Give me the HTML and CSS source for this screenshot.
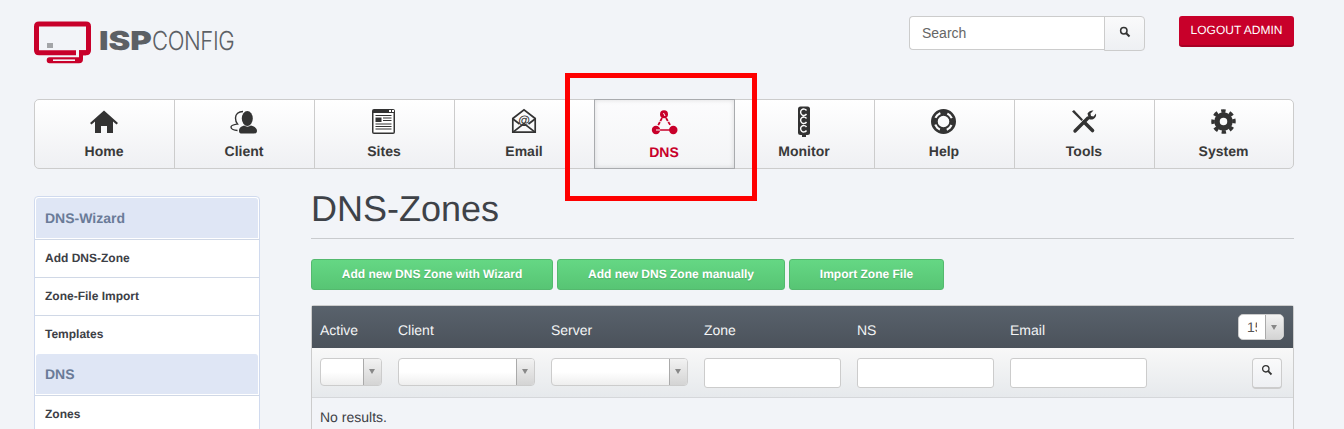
FILE: index.html
```html
<!DOCTYPE html>
<html lang="en">
<head>
<meta charset="utf-8">
<title>ISPConfig DNS-Zones</title>
<link rel="stylesheet" href="styles.css">
</head>
<body>
<div class="page">
  <header class="top">
    <a class="logo">
      <svg class="logo-mark" width="58" height="44" viewBox="0 0 58 44">
        <path d="M45 31.700H52Q54.500 31.700 54.500 29.200V5.500Q54.500 3 52 3H5Q2.500 3 2.500 5.500V29.200Q2.500 31.700 5 31.700H42" fill="none" stroke="#c8002a" stroke-width="5"/>
        <path d="M45 29.200H52V34.200H49V38Q49 42.300 45 42.300H15.500Q12.700 42.300 12.700 39.300Q12.700 36.300 15.500 36.300H45Z" fill="#c8002a"/>
        <rect x="19" y="38.400" width="22" height="1.600" fill="#f2f4f8"/>
        <rect x="13" y="22" width="6" height="5" fill="#a3a5a8"/>
      </svg>
      <span class="logo-text"><b class="logo-isp">ISP</b><span class="logo-config">CONFIG</span></span>
    </a>
    <div class="top-right">
      <div class="search">
        <input class="search-input" type="text" placeholder="Search">
        <span class="search-btn">
          <svg width="12" height="12" viewBox="0 0 12 12"><circle cx="4.800" cy="4.800" r="3.200" fill="none" stroke="#333" stroke-width="1.500"/><path d="M7.200 7.200L10.500 10.500" stroke="#333" stroke-width="2"/></svg>
        </span>
      </div>
      <a class="logout">LOGOUT ADMIN</a>
    </div>
  </header>

  <nav class="nav">
    <a class="nav-item">
      <svg class="nav-icon" viewBox="0 0 32 32"><path d="M16 4.500L30 17L28.500 18.500L25 15.500V27H19V20H13V27H7V15.500L3.500 18.500L2 17Z"/></svg>
      <span>Home</span>
    </a>
    <a class="nav-item">
      <svg class="nav-icon" viewBox="0 0 32 32"><ellipse cx="19.300" cy="12.500" rx="5.500" ry="7.500"/><path d="M11 25C11 21.500 13.500 20.500 16 19.500C18 21 21 21 23 19.500C26 20.500 29 21.500 29 25C29 27 27.500 27.500 26 27.500H14C12 27.500 11 27 11 25Z"/><path d="M15 5.500C10.500 5.500 7.500 8 7.500 12C7.500 15 8.500 17 9.500 18C7 18.500 3 19 3 21C3 23 6 24.500 9.500 24.500" fill="none" stroke="#333" stroke-width="1.400"/></svg>
      <span>Client</span>
    </a>
    <a class="nav-item">
      <svg class="nav-icon" viewBox="0 0 32 32"><rect x="4" y="3" width="23" height="25" rx="2"/><rect x="5.500" y="7" width="20" height="19.500" fill="#fff"/><rect x="21" y="4" width="2" height="2" fill="#fff"/><rect x="24" y="4" width="2" height="2" fill="#fff"/><rect x="7.500" y="11.500" width="6" height="4.500"/><path d="M7.500 9.500H23.500M15 12H23.500M15 14.500H23.500M7.500 18H23.500M7.500 20.500H23.500M7.500 23H23.500" stroke="#333" stroke-width="1.100"/></svg>
      <span>Sites</span>
    </a>
    <a class="nav-item">
      <svg class="nav-icon" viewBox="0 0 32 32"><path d="M4.800 12.500L16 3.800L27.200 12.500V26.200H4.800Z" fill="none" stroke="#333" stroke-width="1.700"/><path d="M5 13L11.500 18M27 13L20.500 18M5 26.200L16 17.500L27 26.200" fill="none" stroke="#333" stroke-width="1.700"/><text class="at" x="16" y="17.500" text-anchor="middle">@</text></svg>
      <span>Email</span>
    </a>
    <a class="nav-item active">
      <svg class="nav-icon" viewBox="0 0 32 32"><circle cx="16" cy="7.300" r="4"/><circle cx="8" cy="23" r="4.200"/><circle cx="25.300" cy="23" r="4.200"/><path d="M14 11L10 18.500M18 11L22.500 18.500" stroke="#c8002a" stroke-width="1.800" stroke-dasharray="3.500 1" fill="none"/><path d="M8 23H22" stroke="#c8002a" stroke-width="1.500" fill="none"/><path d="M8 23H12.200M15.500 6L17 9" stroke="#fff" stroke-width="1" fill="none"/></svg>
      <span>DNS</span>
    </a>
    <a class="nav-item">
      <svg class="nav-icon" viewBox="0 0 32 32"><rect x="10" y="0.500" width="12" height="28.500" rx="2.500"/><rect x="14" y="28" width="4" height="3"/><path d="M18.500 4.500A3.200 3.200 0 1 0 18.500 8M18.500 12.500A3.200 3.200 0 1 0 18.500 16M18.500 21A3.200 3.200 0 1 0 18.500 24.500" fill="none" stroke="#fff" stroke-width="1.400"/></svg>
      <span>Monitor</span>
    </a>
    <a class="nav-item">
      <svg class="nav-icon" viewBox="0 0 32 32"><circle cx="15.500" cy="15.500" r="11.200" fill="none" stroke="#333" stroke-width="2.600"/><circle cx="15.500" cy="15.500" r="6.800" fill="none" stroke="#333" stroke-width="2"/><circle cx="15.500" cy="15.500" r="9" fill="none" stroke="#333" stroke-width="5" stroke-dasharray="7.140 7" transform="rotate(-22 15.500 15.500)"/></svg>
      <span>Help</span>
    </a>
    <a class="nav-item">
      <svg class="nav-icon" viewBox="0 0 32 32"><path d="M4 5.500L6 4L15 13.500L13.500 15Z"/><path d="M16 16L24.500 24.500" stroke="#333" stroke-width="3.600" stroke-linecap="round"/><path d="M7 25L20 12" stroke="#333" stroke-width="3.400" stroke-linecap="round"/><path d="M19.500 7.500C21 5 23.500 4 25.500 4.500L22.500 7.500L23 10L25.500 10.500L28 7.500C28.500 10 27.500 12 25.500 13C24 13.800 22 13.800 21 13Z"/></svg>
      <span>Tools</span>
    </a>
    <a class="nav-item">
      <svg class="nav-icon" viewBox="0 0 32 32"><circle cx="15.500" cy="15.500" r="6.500" fill="none" stroke="#333" stroke-width="5.500"/><circle cx="15.500" cy="15.500" r="10.500" fill="none" stroke="#333" stroke-width="3.500" stroke-dasharray="4.250 4" transform="rotate(-14 15.500 15.500)"/></svg>
      <span>System</span>
    </a>
  </nav>

  <div class="main">
    <aside class="side">
      <h4 class="side-head">DNS-Wizard</h4>
      <a class="side-item">Add DNS-Zone</a>
      <a class="side-item">Zone-File Import</a>
      <a class="side-item side-last">Templates</a>
      <h4 class="side-head">DNS</h4>
      <a class="side-item">Zones</a>
    </aside>

    <section class="content">
      <h1 class="title">DNS-Zones</h1>
      <div class="actions">
        <a class="btn btn-wizard">Add new DNS Zone with Wizard</a>
        <a class="btn btn-manual">Add new DNS Zone manually</a>
        <a class="btn btn-import">Import Zone File</a>
      </div>
      <div class="table">
        <div class="row head">
          <span>Active</span>
          <span>Client</span>
          <span>Server</span>
          <span>Zone</span>
          <span>NS</span>
          <span>Email</span>
          <span class="size"><span class="size-val"><span>15</span></span><span class="arrow"></span></span>
        </div>
        <div class="row filter">
          <span class="sel sel-small"><span class="sel-val"></span><span class="arrow"></span></span>
          <span class="sel"><span class="sel-val"></span><span class="arrow"></span></span>
          <span class="sel"><span class="sel-val"></span><span class="arrow"></span></span>
          <input class="field" type="text">
          <input class="field" type="text">
          <input class="field" type="text">
          <span class="filter-btn">
            <svg width="12" height="12" viewBox="0 0 12 12"><circle cx="4.800" cy="4.800" r="3.200" fill="none" stroke="#333" stroke-width="1.300"/><path d="M7.200 7.200L10.500 10.500" stroke="#333" stroke-width="1.800"/></svg>
          </span>
        </div>
        <div class="empty">No results.</div>
      </div>
    </section>
  </div>
</div>
<div class="highlight"></div>
</body>
</html>
```
FILE: styles.css
```css
* { box-sizing: border-box; }
html, body { margin: 0; height: 429px; overflow: hidden; }
body {
  background: #f2f4f8;
  font-family: "Liberation Sans", Arial, sans-serif;
  color: #3d4046;
  position: relative;
  text-rendering: geometricPrecision;
}
.page { padding: 0 50px 0 34px; }

.top { display: flex; justify-content: space-between; height: 99px; }
.logo { display: flex; align-items: flex-start; padding-top: 21px; }
.logo-mark { display: block; }
.logo-text {
  display: flex;
  margin: 6px 0 0 7px;
  font-family: Inter, "Liberation Sans", sans-serif;
  font-size: 26px;
  line-height: 30px;
}
.logo-isp {
  display: block;
  width: 53px;
  font-weight: 900;
  color: #5c6065;
  transform: scaleX(1.26);
  transform-origin: left center;
}
.logo-config {
  display: block;
  width: 82px;
  font-weight: 300;
  color: #5c6065;
  letter-spacing: -0.5px;
  transform: scaleX(0.85);
  transform-origin: left center;
}

.top-right { display: flex; align-items: flex-start; padding-top: 16px; gap: 34px; }
.search { display: flex; width: 236px; height: 35px; }
.search-input {
  width: 196px;
  height: 34px;
  border: 1px solid #ccc;
  border-right: 0;
  border-radius: 4px 0 0 4px;
  background: #fff;
  padding: 0 12px;
  font: 14px "Liberation Sans", Arial, sans-serif;
  color: #555;
}
.search-input::placeholder { color: #666; opacity: 1; }
.search-btn {
  width: 41px;
  height: 35px;
  margin-left: -1px;
  border: 1px solid #ccc;
  border-radius: 0 4px 4px 0;
  background: linear-gradient(#fafafb, #eef0f3);
  display: flex;
  align-items: center;
  justify-content: center;
  padding-bottom: 3px;
}
.logout {
  width: 115px;
  height: 31px;
  border-radius: 3px;
  background: #c8002a;
  border-bottom: 2px solid #a80024;
  color: #fff;
  font-size: 12px;
  line-height: 29px;
  text-align: center;
}

.nav {
  display: grid;
  grid-template-columns: 139px repeat(7, 140px) 139px;
  height: 70px;
  border: 1px solid #ccc;
  border-radius: 5px;
  background: linear-gradient(#fff, #eff0f3);
}
.nav-item {
  display: flex;
  flex-direction: column;
  align-items: center;
  border-left: 1px solid #ccc;
  padding-top: 6px;
  padding-right: 1px;
  font-size: 14px;
  font-weight: 700;
  line-height: 16px;
  color: #3a3a3a;
}
.nav-item:first-child { border-left: 0; }
.nav-item span { margin-top: 5px; }
.nav-icon { width: 32px; height: 32px; display: block; fill: #333; }
.at { font: 700 12px "Liberation Sans", Arial, sans-serif; fill: #333; }
.nav-item.active {
  position: relative;
  margin: -1px -1px -1px 0;
  padding-top: 7px;
  border: 1px solid #a9abae;
  background: linear-gradient(#fcfcfd, #f3f4f6);
  box-shadow: inset 0 0 5px rgba(0, 0, 0, 0.13);
  color: #c8002a;
}
.nav-item.active .nav-icon { fill: #c8002a; }

.main { display: flex; gap: 51px; padding-top: 27px; align-items: flex-start; }
.side {
  width: 226px;
  flex: none;
  border: 1px solid #d0daee;
  border-radius: 4px;
  background: #fff;
  padding: 1px 0 0;
}
.side-head {
  margin: 0 1px 1px;
  height: 40px;
  padding-left: 9px;
  background: #dfe6f5;
  border-radius: 3px 3px 0 0;
  color: #6a7b98;
  font-size: 14px;
  font-weight: 700;
  line-height: 40px;
}
.side-item {
  display: block;
  height: 38px;
  border-top: 1px solid #d0d8e6;
  padding-left: 10px;
  color: #3d4046;
  font-size: 12px;
  font-weight: 700;
  line-height: 36px;
}
.side-last { height: 39px; }

.content { flex: 1; min-width: 0; }
.title {
  margin: 0;
  height: 43px;
  border-bottom: 1px solid #c9cbce;
  font-size: 36px;
  font-weight: 400;
  line-height: 26px;
  color: #3e4248;
}
.actions { display: flex; gap: 4px; margin-top: 20px; }
.btn {
  height: 31px;
  border: 1px solid #54b96e;
  border-radius: 3px;
  background: linear-gradient(#65d784, #57c574);
  color: #fff;
  font-size: 12px;
  font-weight: 700;
  line-height: 28px;
  text-align: center;
  text-shadow: 0 1px 1px rgba(0, 0, 0, 0.15);
}
.btn-wizard { width: 242px; }
.btn-manual { width: 228px; }
.btn-import { width: 155px; }

.table { margin-top: 15px; border: 1px solid #ccc; border-bottom: 0; border-radius: 3px 3px 0 0; }
.row { display: grid; padding-left: 8px; }
.head {
  height: 42px;
  background: linear-gradient(#59626c, #4b525b);
  color: #f4f5f6;
  font-size: 14px;
  line-height: 48px;
  column-gap: 8px;
  grid-template-columns: 70px repeat(5, 145px) 1fr;
}
.size {
  justify-self: end;
  display: flex;
  width: 46px;
  height: 26px;
  margin: 8px 9px 0 0;
  border: 1px solid #ccc;
  border-radius: 5px;
  overflow: hidden;
  background: #fff;
  color: #555;
  line-height: 24px;
}
.size-val { flex: 1; padding-left: 8px; overflow: hidden; }
.size-val span { display: block; width: 10px; overflow: hidden; }
.arrow {
  width: 18px;
  flex: none;
  position: relative;
  background: linear-gradient(#f2f2f2, #d4d4d4);
  border-left: 1px solid #aaa;
}
.arrow::after {
  content: "";
  position: absolute;
  left: 5px;
  top: 10px;
  border: 3px solid transparent;
  border-top: 5px solid #888;
  border-bottom: 0;
}
.filter {
  height: 50px;
  padding-top: 10px;
  background: linear-gradient(#f8f8f8, #e6e9ec);
  border-bottom: 1px solid #d5d7da;
  grid-template-columns: 62px repeat(5, 137px) 1fr;
  column-gap: 16px;
}
.sel {
  display: flex;
  height: 28px;
  border-radius: 4px;
  border: 1px solid #ccc;
  overflow: hidden;
  background: linear-gradient(#fff 50%, #eeeeee);
}
.sel .sel-val { flex: 1; }
.field {
  width: 137px;
  height: 30px;
  border: 1px solid #ccc;
  border-radius: 3px;
  background: #fff;
  padding: 0;
}
.filter-btn {
  justify-self: end;
  width: 30px;
  height: 31px;
  margin-right: 11px;
  border: 1px solid #ccc;
  border-bottom-width: 2px;
  border-radius: 4px;
  background: linear-gradient(#fafafb, #eef0f3);
  display: flex;
  align-items: center;
  justify-content: center;
  padding: 0 0 6px 0;
}
.empty { padding: 11px 8px; font-size: 14px; line-height: 16px; }

.highlight {
  position: absolute;
  left: 565px;
  top: 73px;
  width: 192px;
  height: 128px;
  border: 5px solid #fe0000;
}
```
